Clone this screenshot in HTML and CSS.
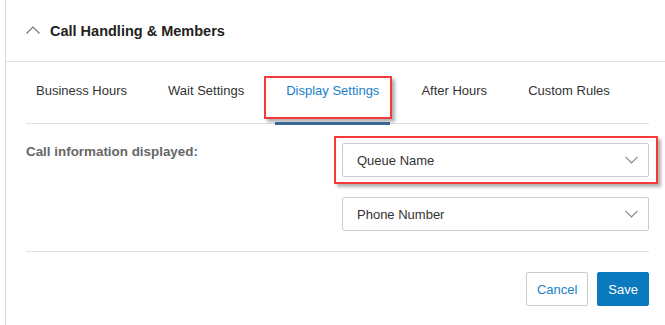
FILE: index.html
```html
<!DOCTYPE html>
<html lang="en">
<head>
    <meta charset="UTF-8">
    <meta name="viewport" content="width=device-width, initial-scale=1.0">
    <title>Call Handling &amp; Members</title>
    <link rel="stylesheet" href="styles.css">
</head>
<body>
    <div class="panel">
        <div class="panel-head">
            <svg class="collapse-icon" width="14" height="8" viewBox="0 0 14 8">
                <path d="M0.5 7.5 L7 1 L13.5 7.5" fill="none" stroke="#777" stroke-width="1.2"/>
            </svg>
            <h2 class="panel-title">Call Handling &amp; Members</h2>
        </div>

        <div class="panel-body">
            <ul class="tabs">
                <li class="tab">Business Hours</li>
                <li class="tab">Wait Settings</li>
                <li class="tab active">Display Settings<span class="mark mark-tab"></span></li>
                <li class="tab">After Hours</li>
                <li class="tab">Custom Rules</li>
            </ul>

            <div class="field-row">
                <label class="field-label">Call information displayed:</label>
                <div class="field-controls">
                    <div class="select">
                        <span>Queue Name</span>
                        <svg class="select-arrow" width="13" height="8" viewBox="0 0 13 8">
                            <path d="M0.5 0.8 L6.5 6.8 L12.5 0.8" fill="none" stroke="#888" stroke-width="1.2"/>
                        </svg>
                        <span class="mark mark-select"></span>
                    </div>
                    <div class="select">
                        <span>Phone Number</span>
                        <svg class="select-arrow" width="13" height="8" viewBox="0 0 13 8">
                            <path d="M0.5 0.8 L6.5 6.8 L12.5 0.8" fill="none" stroke="#888" stroke-width="1.2"/>
                        </svg>
                    </div>
                </div>
            </div>

            <div class="actions">
                <button class="btn btn-cancel">Cancel</button>
                <button class="btn btn-save">Save</button>
            </div>
        </div>
    </div>
</body>
</html>
```

FILE: styles.css
```css
body {
    font-family: "Liberation Sans", Arial, sans-serif;
    font-size: 13px;
    color: #333;
    background-color: #fff;
    margin: 0;
    padding: 0;
}

.panel {
    margin-left: 5px;
    border-left: 1px solid #dcdcdc;
    min-height: 325px;
}

.panel-head {
    display: flex;
    align-items: center;
    height: 61px;
    padding-left: 20px;
    border-bottom: 1px solid #e0e0e0;
}

.collapse-icon {
    margin-right: 10px;
    margin-top: -1px;
}

.panel-title {
    margin: 0;
    font-size: 14.5px;
    font-weight: bold;
    color: #222;
}

.panel-body {
    padding: 0 16px 0 20px;
}

.tabs {
    display: flex;
    gap: 21px;
    list-style: none;
    margin: 0;
    padding: 0;
    border-bottom: 1px solid #e0e0e0;
}

.tab {
    position: relative;
    padding: 21px 10px 23px;
    line-height: 16px;
    margin-bottom: -2px;
    border-bottom: 3px solid transparent;
    color: #333;
}

.tab.active {
    padding-left: 11px;
    padding-right: 11px;
    color: #1b80c8;
    border-bottom-color: #3c6f9f;
}

.mark {
    position: absolute;
    border: 2px solid #f23a3a;
    box-shadow: 3px 3px 3px rgba(0, 0, 0, 0.3);
    pointer-events: none;
}

.mark-tab {
    left: -11px;
    top: 14px;
    width: 124px;
    height: 39px;
}

.field-row {
    display: flex;
    margin-top: 19px;
    padding-bottom: 20px;
    border-bottom: 1px solid #e0e0e0;
}

.field-label {
    flex: 1;
    padding-top: 1px;
    line-height: 16px;
    font-size: 13.4px;
    font-weight: bold;
    color: #666;
}

.field-controls {
    display: flex;
    flex-direction: column;
    gap: 20px;
    width: 307px;
}

.select {
    position: relative;
    display: flex;
    align-items: center;
    justify-content: space-between;
    height: 34px;
    box-sizing: border-box;
    padding: 0 10px 0 14px;
    border: 1px solid #ccc;
    border-radius: 2px;
    color: #333;
}

.mark-select {
    left: -9px;
    top: -8px;
    width: 320px;
    height: 44px;
}

.actions {
    display: flex;
    justify-content: flex-end;
    gap: 9px;
    margin-top: 20px;
}

.btn {
    height: 34px;
    padding: 0 10px;
    font-family: inherit;
    font-size: 13px;
    border: 1px solid #ccc;
    border-radius: 2px;
    background-color: #fff;
    cursor: pointer;
}

.btn-cancel {
    color: #1b80c8;
}

.btn-save {
    color: #fff;
    background-color: #0a79bd;
    border-color: #0a79bd;
}
```
